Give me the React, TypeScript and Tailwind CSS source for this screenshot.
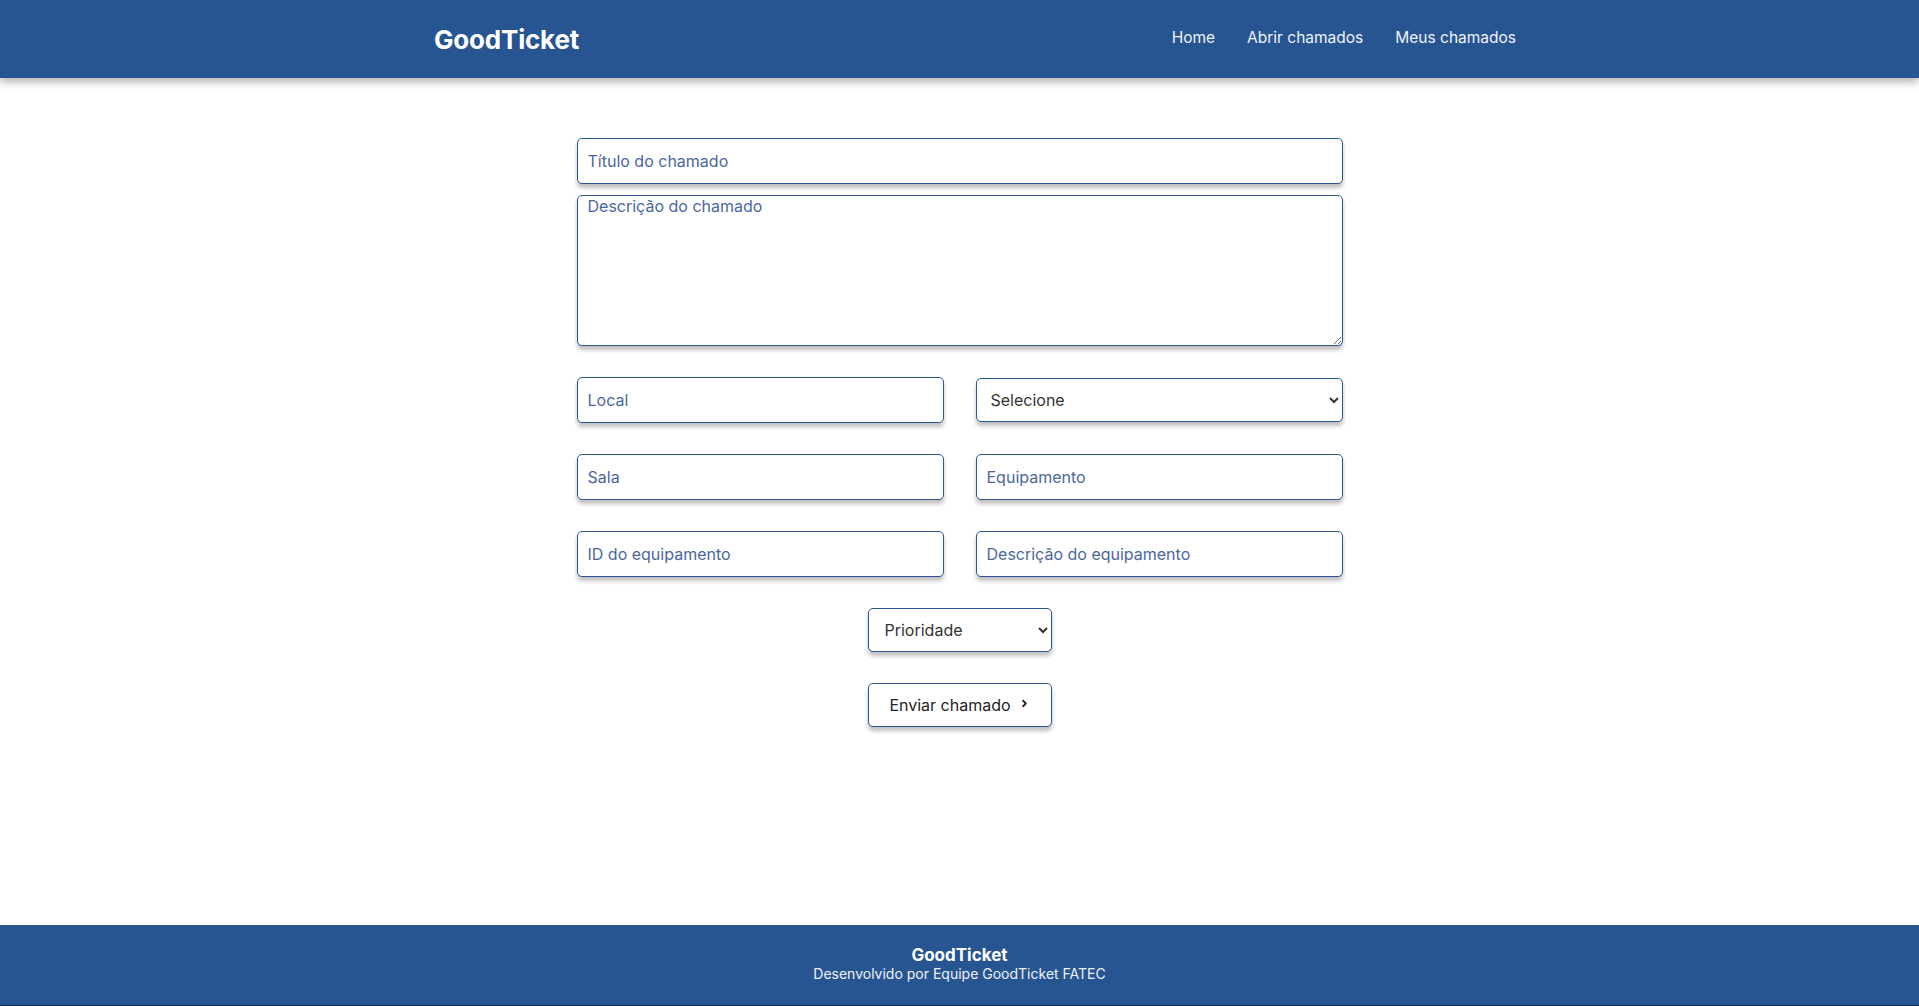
import { ChevronRight } from "lucide-react";

const font = { fontFamily: "Inter, 'Noto Sans', sans-serif" };

const fieldClass =
  "h-[46px] w-full rounded-[5px] border-[1.5px] border-[#2a5596] bg-white px-[10px] text-[16px] text-[#333] placeholder:text-[#4b679c] shadow-[0_4px_4px_rgba(0,0,0,0.25)] outline-none";

const selectClass =
  "h-[44px] w-full rounded-[5px] border-[1.5px] border-[#2a5596] bg-white pl-[10px] pr-[6px] text-[16px] text-[#333] shadow-[0_4px_4px_rgba(0,0,0,0.25)] outline-none";

export default function App() {
  return (
    <div className="flex min-h-screen flex-col bg-white" style={font}>
      {/* Header */}
      <header className="relative z-10 flex h-[78px] items-center justify-between bg-[#275592] pl-[434px] pr-[403px] shadow-[0_4px_8px_rgba(0,0,0,0.3)]">
        <h1 className="text-[26px] font-bold tracking-[-0.2px] text-white">GoodTicket</h1>
        <nav className="-mt-[2px] flex gap-[32px] text-[15.5px] text-[#eef2f9]">
          <a>Home</a>
          <a>Abrir chamados</a>
          <a>Meus chamados</a>
        </nav>
      </header>

      {/* Form */}
      <main className="flex-1">
        <form className="mx-auto mt-[60px] flex w-[766px] flex-col">
          <input className={fieldClass} placeholder="Título do chamado" />
          <textarea
            className="mt-[11px] h-[151px] w-full rounded-[5px] border-[1.5px] border-[#2a5596] bg-white px-[10px] text-[16px] leading-[20px] text-[#333] placeholder:text-[#4b679c] shadow-[0_4px_4px_rgba(0,0,0,0.25)] outline-none"
            placeholder="Descrição do chamado"
          />

          <div className="mt-[31px] grid grid-cols-2 gap-x-[32px] gap-y-[31px]">
            <input className={fieldClass} placeholder="Local" />
            <div className="flex h-[46px] items-center">
              <select className={selectClass} defaultValue="">
                <option value="">Selecione</option>
              </select>
            </div>
            <input className={fieldClass} placeholder="Sala" />
            <input className={fieldClass} placeholder="Equipamento" />
            <input className={fieldClass} placeholder="ID do equipamento" />
            <input className={fieldClass} placeholder="Descrição do equipamento" />
          </div>

          <div className="mt-[31px] flex flex-col items-center gap-[31px]">
            <select className="h-[44px] w-[184px] rounded-[5px] border-[1.5px] border-[#2a5596] bg-white pl-[12px] pr-[6px] text-[16px] text-[#333] shadow-[0_4px_4px_rgba(0,0,0,0.25)] outline-none" defaultValue="">
              <option value="">Prioridade</option>
            </select>
            <button
              type="button"
              className="flex h-[44px] w-[184px] items-center justify-center gap-[8px] rounded-[5px] border-[1.5px] border-[#2a5596] bg-white text-[16px] text-[#222] shadow-[0_4px_4px_rgba(0,0,0,0.25)]"
            >
              Enviar chamado
              <ChevronRight size={11} strokeWidth={4} className="-mt-[3px]" />
            </button>
          </div>
        </form>
      </main>

      {/* Footer */}
      <footer className="flex h-[81px] flex-col items-center justify-center border-b border-[#0c2447] bg-[#275592] pb-[2px] text-white">
        <p className="text-[17px] font-bold leading-[20px]">GoodTicket</p>
        <p className="text-[14px] leading-[18px] text-[#eef2f9]">Desenvolvido por Equipe GoodTicket FATEC</p>
      </footer>
    </div>
  );
}
